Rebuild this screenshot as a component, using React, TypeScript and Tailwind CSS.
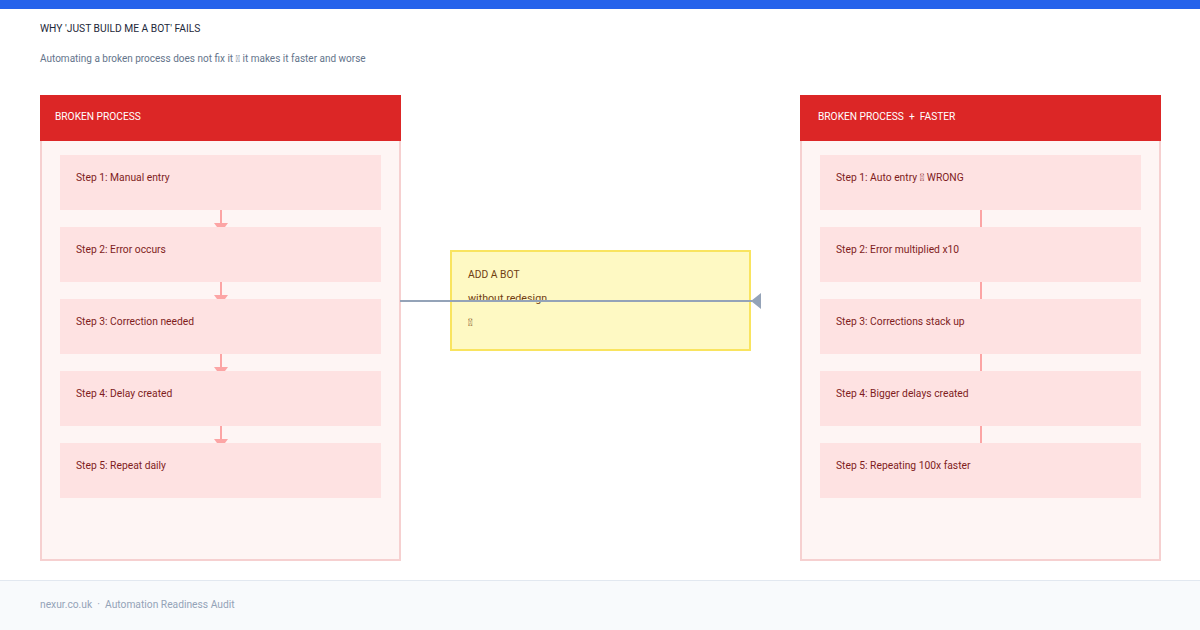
const font = "[font-family:Roboto,'Liberation_Sans',sans-serif]";

const leftSteps = [
  "Step 1: Manual entry",
  "Step 2: Error occurs",
  "Step 3: Correction needed",
  "Step 4: Delay created",
  "Step 5: Repeat daily",
];

const rightSteps = [
  "Step 1: Auto entry \uFFFF WRONG",
  "Step 2: Error multiplied x10",
  "Step 3: Corrections stack up",
  "Step 4: Bigger delays created",
  "Step 5: Repeating 100x faster",
];

const Panel = ({
  title,
  steps,
  titlePad,
  arrowHeads,
}: {
  title: string;
  steps: string[];
  titlePad: string;
  arrowHeads: boolean;
}) => (
  <div className="flex h-[466px] w-[361px] flex-col">
    <div className={`h-[46px] bg-[#dc2626] pt-[15px] text-[10.2px] leading-[14px] text-white ${titlePad}`}>
      <span className="whitespace-pre">{title}</span>
    </div>
    <div className="flex flex-1 flex-col border-2 border-t-0 border-[#f6d0d0] bg-[#fef5f4] px-[18px] pt-[14px]">
      {steps.map((step, i) => (
        <div key={step} className="flex flex-col">
          <div className="h-[55px] bg-[#fee2e2] px-4 pt-4 text-[10.3px] leading-[14px] text-[#7f1d1d]">{step}</div>
          {i < steps.length - 1 && (
            <div className="flex h-[17px] flex-col items-center">
              <div className={`w-[2px] bg-[#fca5a5] ${arrowHeads ? "h-[13px]" : "h-[17px]"}`} />
              {arrowHeads && (
                <svg width="14" height="4" viewBox="0 0 14 4" className="block">
                  <path d="M0 0H14L11 4H3Z" fill="#fca5a5" />
                </svg>
              )}
            </div>
          )}
        </div>
      ))}
    </div>
  </div>
);

export default function App() {
  return (
    <div className={`relative flex h-[630px] w-[1200px] flex-col overflow-hidden bg-white ${font}`}>
      <div className="h-[9px] bg-[#2563eb]" />
      <div className="flex flex-1 flex-col pr-[39px] pl-10">
        <h1 className="mt-[13px] text-[10.25px] leading-[14px] font-normal text-[#1e293b]">WHY 'JUST BUILD ME A BOT' FAILS</h1>
        <p className="mt-4 text-[10px] leading-[14px] text-[#64748b]">
          Automating a broken process does not fix it {"\uFFFF"} it makes it faster and worse
        </p>
        <div className="mt-[29px] flex justify-between">
          <Panel title="BROKEN PROCESS" steps={leftSteps} titlePad="pl-[15px]" arrowHeads />
          <div className="mt-[155px] h-[101px] w-[301px] self-start border-2 border-[#f9e45f] bg-[#fef9c3] px-4 pt-[16px] text-[10.3px] leading-[14px] text-[#713f12]">
            <p>ADD A BOT</p>
            <p className="mt-[10px] text-[10.7px]">without redesign</p>
            <p className="mt-[10px]">{"\uFFFF"}</p>
          </div>
          <Panel title="BROKEN PROCESS  +  FASTER" steps={rightSteps} titlePad="pl-[18px]" arrowHeads={false} />
        </div>
      </div>
      <div className="flex h-[50px] items-center border-t border-[#e2e8f0] bg-[#f8fafc] px-10 pb-[2px] text-[10.25px] whitespace-pre text-[#94a3b8]">
        nexur.co.uk  ·  Automation Readiness Audit
      </div>
      {/* connector over the yellow box */}
      <svg width="362" height="20" viewBox="0 0 362 20" className="absolute top-[291px] left-[400px]">
        <path d="M0 9H352V11H0Z" fill="#94a3b8" />
        <path d="M351 10L361 2V18Z" fill="#94a3b8" />
      </svg>
    </div>
  );
}
